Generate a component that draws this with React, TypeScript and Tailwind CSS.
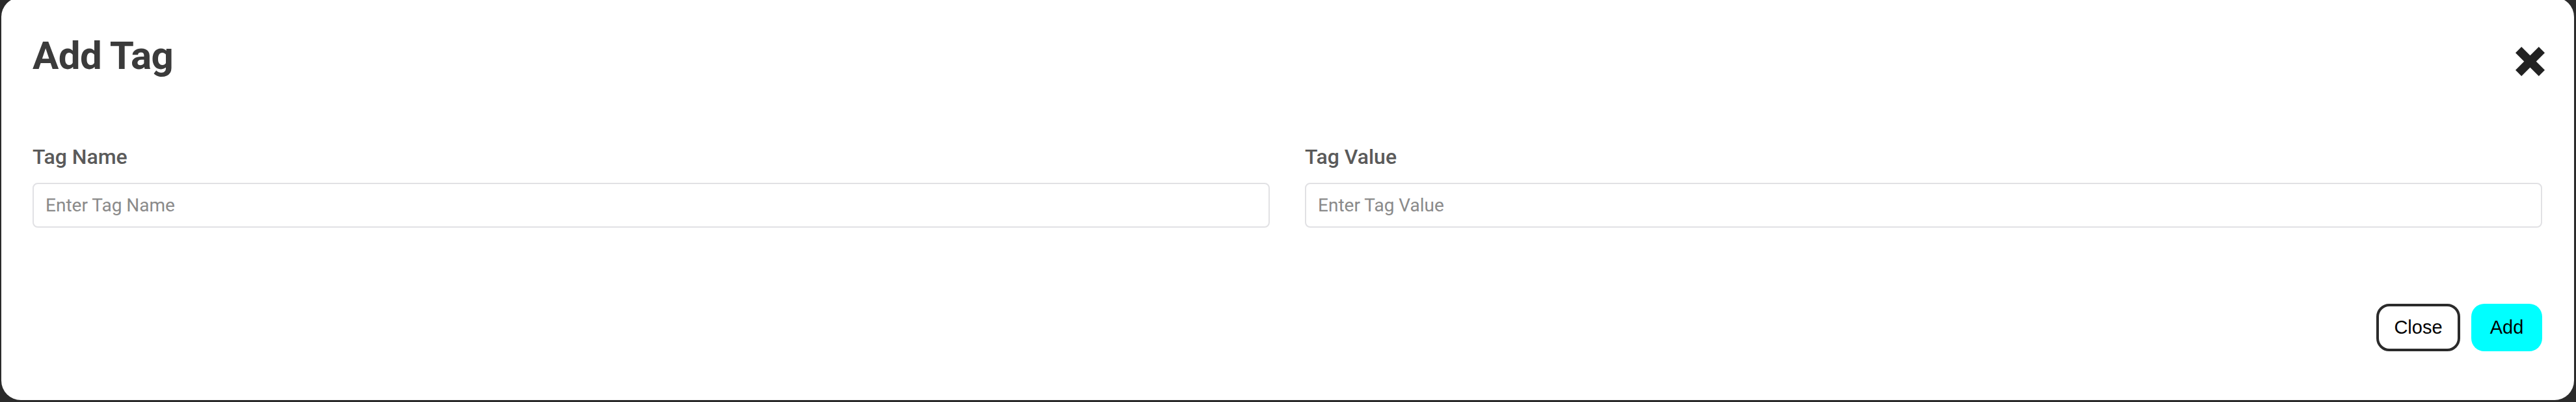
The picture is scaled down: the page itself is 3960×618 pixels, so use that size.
import React from 'react';

// Add Tag modal, sitting on a dark backdrop

const font = { fontFamily: 'Roboto, "Noto Sans", sans-serif' };

function CloseIcon() {
  return (
    <svg width="45" height="45" viewBox="0 0 45 45" fill="none">
      <line x1="4.6" y1="4.6" x2="40.4" y2="40.4" stroke="#222222" strokeWidth="13" />
      <line x1="40.4" y1="4.6" x2="4.6" y2="40.4" stroke="#222222" strokeWidth="13" />
    </svg>
  );
}

function Field({ label, placeholder }: { label: string; placeholder: string }) {
  return (
    <div className="flex flex-col">
      <label className="text-[32px] leading-none font-medium text-[#5a5a5a]">{label}</label>
      <input
        type="text"
        placeholder={placeholder}
        className="mt-[24px] h-[69px] w-full rounded-[8px] border-2 border-[#e1e1e4] bg-white pl-[18px] text-[28px] text-[#333] outline-none placeholder:text-[#8a8a8a]"
      />
    </div>
  );
}

export default function App() {
  return (
    <div className="h-[618px] w-full overflow-hidden bg-[#2b2b2b]" style={font}>
      <div className="-mt-[4px] ml-[2px] mr-[3px] flex h-[619px] flex-col rounded-[30px] bg-white pl-[48px] pr-[49px] pt-[60px]">
        {/* Header */}
        <div className="flex items-start justify-between">
          <h1 className="text-[60px] leading-none font-bold tracking-[-0.01em] text-[#3b3b3b]">
            Add Tag
          </h1>
          <button className="-mr-[4px] mt-[16px]" aria-label="Close">
            <CloseIcon />
          </button>
        </div>

        {/* Fields */}
        <div className="mt-[108px] grid grid-cols-2 gap-[54px]">
          <Field label="Tag Name" placeholder="Enter Tag Name" />
          <Field label="Tag Value" placeholder="Enter Tag Value" />
        </div>

        {/* Footer */}
        <div
          className="mt-[117px] flex justify-end gap-[17px]"
          style={{ fontFamily: '"Liberation Sans", Arial, sans-serif' }}
        >
          <button className="h-[73px] w-[129px] rounded-[20px] border-4 border-[#2b2b2b] bg-white text-[29px] text-black">
            Close
          </button>
          <button className="h-[73px] w-[109px] rounded-[20px] bg-[#00ffff] text-[29px] text-black">
            Add
          </button>
        </div>
      </div>
    </div>
  );
}
